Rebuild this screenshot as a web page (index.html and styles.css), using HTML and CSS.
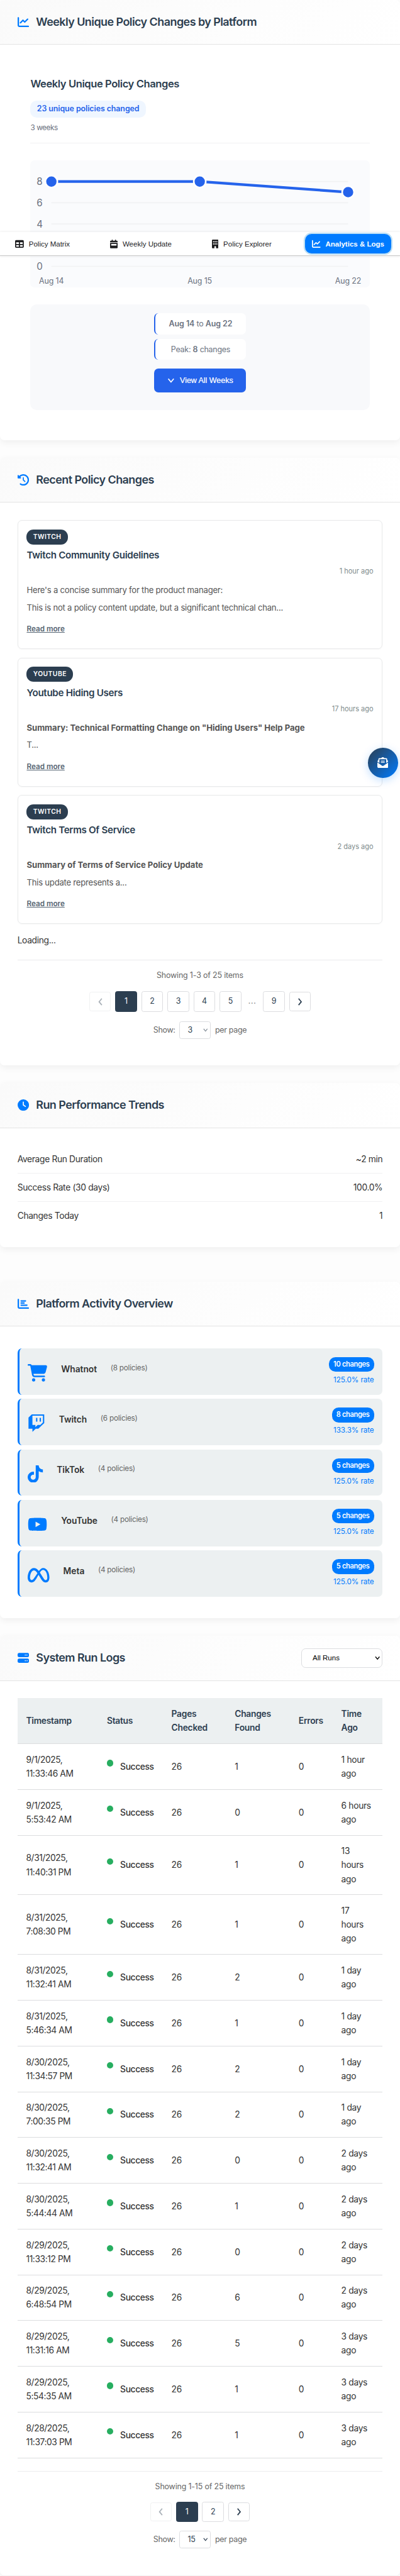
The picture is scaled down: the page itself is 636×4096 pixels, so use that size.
FILE: index.html
```html
<!DOCTYPE html>
<html lang="en">
<head>
<meta charset="utf-8">
<title>Analytics &amp; Logs</title>
<link rel="stylesheet" href="styles.css">
</head>
<body>
<svg class="defs" width="0" height="0">
  <symbol id="chart-line" viewBox="0 0 512 512"><path d="M64 64c0-17.700-14.300-32-32-32S0 46.300 0 64V400c0 44.200 35.800 80 80 80H480c17.700 0 32-14.300 32-32s-14.300-32-32-32H80c-8.800 0-16-7.200-16-16V64zm406.600 86.600c12.500-12.500 12.500-32.800 0-45.300s-32.800-12.500-45.300 0L320 210.700l-57.400-57.400c-12.500-12.500-32.800-12.500-45.300 0l-112 112c-12.500 12.500-12.500 32.800 0 45.300s32.800 12.500 45.300 0L240 221.300l57.400 57.400c12.500 12.500 32.800 12.500 45.300 0l128-128z"/></symbol>
  <symbol id="chevron" viewBox="0 0 16 16"><path d="M3 5l5 6 5-6" fill="none" stroke="currentColor" stroke-width="2"/></symbol>
  <symbol id="prev" viewBox="0 0 10 16"><path d="M8 2L3 8l5 6" fill="none" stroke="currentColor" stroke-width="2"/></symbol>
  <symbol id="next" viewBox="0 0 10 16"><path d="M2 2l5 6-5 6" fill="none" stroke="currentColor" stroke-width="2"/></symbol>
</svg>

<div class="page">

<section class="card card-weekly">
  <header class="card-header">
    <svg class="icon"><use href="#chart-line"/></svg>
    <h2>Weekly Unique Policy Changes by Platform</h2>
  </header>
  <div class="weekly">
    <h3>Weekly Unique Policy Changes</h3>
    <span class="badge">23 unique policies changed</span>
    <p class="weeks">3 weeks</p>
    <svg class="chart" viewBox="0 0 624 234">
      <g class="grid"><path d="M39 39H585M39 78H585M39 117H585M39 156H585M39 195H585"/></g>
      <g class="axis-y"><text x="12" y="45.300">8</text><text x="12" y="84.300">6</text><text x="12" y="123.300">4</text><text x="12" y="201.300">0</text></g>
      <polyline class="trend" points="39,39 312,39 585,58.500"/>
      <g class="dots"><circle cx="39" cy="39" r="11"/><circle cx="312" cy="39" r="11"/><circle cx="585" cy="58.500" r="11"/></g>
      <g class="axis-x"><text x="39" y="226.500">Aug 14</text><text x="312" y="226.500">Aug 15</text><text x="585" y="226.500">Aug 22</text></g>
    </svg>
    <div class="summary">
      <div class="summary-item"><b>Aug 14</b> to <b>Aug 22</b></div>
      <div class="summary-item">Peak: <b>8</b> changes</div>
      <button class="view-all"><svg width="16" height="16"><use href="#chevron"/></svg>View All Weeks</button>
    </div>
  </div>
</section>

<section class="card card-recent">
  <header class="card-header">
    <svg class="icon" viewBox="0 0 512 512"><path d="M75 75L41 41C25.900 25.900 0 36.600 0 57.900V168c0 13.300 10.700 24 24 24H134.100c21.400 0 32.100-25.900 17-41l-30.800-30.800C155 85.500 203 64 256 64c106 0 192 86 192 192s-86 192-192 192c-40.800 0-78.600-12.700-109.700-34.400c-14.500-10.100-34.400-6.600-44.600 7.900s-6.600 34.400 7.900 44.600C151.200 495 201.700 512 256 512c141.400 0 256-114.600 256-256S397.400 0 256 0C185.300 0 121.300 28.700 75 75zm181 53c-13.300 0-24 10.700-24 24V256c0 6.400 2.500 12.500 7 17l72 72c9.400 9.400 24.600 9.400 33.900 0s9.400-24.600 0-33.900l-65-65V152c0-13.300-10.700-24-24-24z"/></svg>
    <h2>Recent Policy Changes</h2>
  </header>
  <div class="card-body">
    <article class="change">
      <span class="tag">TWITCH</span>
      <h4>Twitch Community Guidelines</h4>
      <time>1 hour ago</time>
      <p>Here's a concise summary for the product manager:</p>
      <p>This is not a policy content update, but a significant technical chan...</p>
      <a>Read more</a>
    </article>
    <article class="change">
      <span class="tag">YOUTUBE</span>
      <h4>Youtube Hiding Users</h4>
      <time>17 hours ago</time>
      <p><b>Summary: Technical Formatting Change on "Hiding Users" Help Page</b></p>
      <p>T...</p>
      <a>Read more</a>
    </article>
    <article class="change">
      <span class="tag">TWITCH</span>
      <h4>Twitch Terms Of Service</h4>
      <time>2 days ago</time>
      <p><b>Summary of Terms of Service Policy Update</b></p>
      <p>This update represents a...</p>
      <a>Read more</a>
    </article>
    <p class="loading">Loading...</p>
    <div class="pagination">
      <p>Showing 1-3 of 25 items</p>
      <div class="pages pages-tall">
        <span class="pg arrow off"><svg width="10" height="16"><use href="#prev"/></svg></span>
        <span class="pg on">1</span><span class="pg">2</span><span class="pg">3</span><span class="pg">4</span><span class="pg">5</span>
        <span class="dots-gap">...</span>
        <span class="pg">9</span>
        <span class="pg arrow"><svg width="10" height="16"><use href="#next"/></svg></span>
      </div>
      <div class="per-page">Show: <span class="pick pick-muted">3<svg width="11" height="11"><use href="#chevron"/></svg></span> per page</div>
    </div>
  </div>
</section>

<section class="card card-trends">
  <header class="card-header">
    <svg class="icon" viewBox="0 0 512 512"><path d="M256 0a256 256 0 1 1 0 512A256 256 0 1 1 256 0zM232 120V256c0 8 4 15.500 10.700 20l96 64c11 7.400 25.900 4.400 33.300-6.700s4.400-25.900-6.700-33.300L280 243.200V120c0-13.300-10.700-24-24-24s-24 10.700-24 24z"/></svg>
    <h2>Run Performance Trends</h2>
  </header>
  <div class="card-body">
    <div class="stat"><span>Average Run Duration</span><span>~2 min</span></div>
    <div class="stat"><span>Success Rate (30 days)</span><span>100.0%</span></div>
    <div class="stat"><span>Changes Today</span><span>1</span></div>
  </div>
</section>

<section class="card card-activity">
  <header class="card-header">
    <svg class="icon" viewBox="0 0 512 512"><path d="M32 32c17.700 0 32 14.300 32 32V400c0 8.800 7.200 16 16 16H480c17.700 0 32 14.300 32 32s-14.300 32-32 32H80c-44.200 0-80-35.800-80-80V64C0 46.300 14.300 32 32 32zm96 96c0-17.700 14.300-32 32-32l192 0c17.700 0 32 14.300 32 32s-14.300 32-32 32l-192 0c-17.700 0-32-14.300-32-32zm32 64H288c17.700 0 32 14.300 32 32s-14.300 32-32 32H160c-17.700 0-32-14.300-32-32s14.300-32 32-32zm0 96H416c17.700 0 32 14.300 32 32s-14.300 32-32 32H160c-17.700 0-32-14.300-32-32s14.300-32 32-32z"/></svg>
    <h2>Platform Activity Overview</h2>
  </header>
  <div class="card-body">
    <div class="platform">
      <svg width="36" height="32" viewBox="0 0 576 512"><path d="M0 24C0 10.700 10.700 0 24 0H69.500c22 0 41.500 12.800 50.600 32h411c26.300 0 45.500 25 38.600 50.400l-41 152.300c-8.500 31.400-37 53.300-69.500 53.300H170.700l5.400 28.500c2.200 11.300 12.100 19.500 23.600 19.500H488c13.300 0 24 10.700 24 24s-10.700 24-24 24H199.700c-34.600 0-64.300-24.600-70.700-58.500L77.400 54.500c-.7-3.800-4-6.500-7.900-6.500H24C10.700 48 0 37.300 0 24zM128 464a48 48 0 1 1 96 0 48 48 0 1 1-96 0zm336-48a48 48 0 1 1 0 96 48 48 0 1 1 0-96z"/></svg>
      <strong>Whatnot</strong><small>(8 policies)</small>
      <div class="rate"><span>10 changes</span>125.0% rate</div>
    </div>
    <div class="platform">
      <svg width="32" height="32" viewBox="0 0 512 512"><path d="M391.170 103.470H352.540v109.700h38.630zM285 103H246.370V212.750H285zM120.830 0L24.310 91.420V420.580H140.140V512l96.530-91.420h77.250L487.690 256V0zM449.070 237.750l-77.220 73.120H294.610l-67.600 64v-64H140.140V36.580H449.070z"/></svg>
      <strong>Twitch</strong><small>(6 policies)</small>
      <div class="rate"><span>8 changes</span>133.3% rate</div>
    </div>
    <div class="platform">
      <svg width="28" height="32" viewBox="0 0 448 512"><path d="M448,209.910a210.060,210.060,0,0,1-122.770-39.250V349.380A162.550,162.550,0,1,1,185,188.310V278.200a74.620,74.620,0,1,0,52.230,71.180V0l88,0a121.180,121.180,0,0,0,1.860,22.170h0A122.180,122.180,0,0,0,381,102.390a121.430,121.430,0,0,0,67,20.140Z"/></svg>
      <strong>TikTok</strong><small>(4 policies)</small>
      <div class="rate"><span>5 changes</span>125.0% rate</div>
    </div>
    <div class="platform">
      <svg width="36" height="32" viewBox="0 0 576 512"><path d="M549.655 124.083c-6.281-23.650-24.787-42.276-48.284-48.597C458.781 64 288 64 288 64S117.220 64 74.629 75.486c-23.497 6.322-42.003 24.947-48.284 48.597-11.412 42.867-11.412 132.305-11.412 132.305s0 89.438 11.412 132.305c6.281 23.650 24.787 41.500 48.284 47.821C117.220 448 288 448 288 448s170.780 0 213.371-11.486c23.497-6.321 42.003-24.171 48.284-47.821 11.412-42.867 11.412-132.305 11.412-132.305s0-89.438-11.412-132.305zm-317.510 213.508V175.185l142.739 81.205-142.739 81.201z"/></svg>
      <strong>YouTube</strong><small>(4 policies)</small>
      <div class="rate"><span>5 changes</span>125.0% rate</div>
    </div>
    <div class="platform">
      <svg width="40" height="32" viewBox="0 0 640 512"><path d="M640 317.900C640 409.200 600.600 466.400 529.700 466.400C467.100 466.400 433.900 431.800 372.800 329.800L341.400 277.200C333.100 264.700 326.900 253 320.200 242.200C300.100 276 273.100 325.200 273.100 325.200C206.100 441.800 168.500 466.400 116.200 466.400C43.400 466.400 0 409.100 0 320.500C0 177.500 79.800 42.400 183.900 42.400C234.100 42.400 277.700 67.100 328.700 131.900C365.800 81.800 406.800 42.400 459.300 42.400C558.400 42.400 640 168.100 640 317.900H640zM287.400 192.200C244.500 130.100 216.500 111.700 183 111.700C121.100 111.700 69.200 217.800 69.200 321.700C69.200 370.200 87.700 397.400 118.800 397.400C149 397.400 167.800 378.400 222 293.600C222 293.600 246.700 254.500 287.400 192.200V192.200zM531.200 397.400C563.400 397.400 578.100 369.900 578.100 322.500C578.100 198.300 523.800 97.100 454.900 97.100C421.700 97.100 393.800 123 360 175.100C369.400 188.900 379.100 204.100 389.300 220.500L426.800 282.900C485.500 377 500.300 397.400 531.200 397.400L531.200 397.400z"/></svg>
      <strong>Meta</strong><small>(4 policies)</small>
      <div class="rate"><span>5 changes</span>125.0% rate</div>
    </div>
  </div>
</section>

<section class="card card-logs">
  <header class="card-header">
    <svg class="icon" viewBox="0 0 512 512"><path d="M64 32C28.700 32 0 60.700 0 96v64c0 35.300 28.700 64 64 64H448c35.300 0 64-28.700 64-64V96c0-35.300-28.700-64-64-64H64zm280 72a24 24 0 1 1 0 48 24 24 0 1 1 0-48zm48 24a24 24 0 1 1 48 0 24 24 0 1 1 -48 0zM64 288c-35.300 0-64 28.700-64 64v64c0 35.300 28.700 64 64 64H448c35.300 0 64-28.700 64-64V352c0-35.300-28.700-64-64-64H64zm280 72a24 24 0 1 1 0 48 24 24 0 1 1 0-48zm56 24a24 24 0 1 1 48 0 24 24 0 1 1 -48 0z"/></svg>
    <h2>System Run Logs</h2>
    <div class="filter">All Runs<svg width="12" height="12"><use href="#chevron"/></svg></div>
  </header>
  <div class="card-body">
    <table class="logs">
      <colgroup><col class="c1"><col class="c2"><col class="c3"><col class="c4"><col class="c5"><col class="c6"></colgroup>
      <thead><tr><th>Timestamp</th><th>Status</th><th>Pages<br>Checked</th><th>Changes<br>Found</th><th>Errors</th><th>Time<br>Ago</th></tr></thead>
      <tbody>
        <tr><td>9/1/2025,<br>11:33:46 AM</td><td><i></i><em>Success</em></td><td>26</td><td>1</td><td>0</td><td>1 hour<br>ago</td></tr>
        <tr><td>9/1/2025,<br>5:53:42 AM</td><td><i></i><em>Success</em></td><td>26</td><td>0</td><td>0</td><td>6 hours<br>ago</td></tr>
        <tr><td>8/31/2025,<br>11:40:31 PM</td><td><i></i><em>Success</em></td><td>26</td><td>1</td><td>0</td><td>13<br>hours<br>ago</td></tr>
        <tr><td>8/31/2025,<br>7:08:30 PM</td><td><i></i><em>Success</em></td><td>26</td><td>1</td><td>0</td><td>17<br>hours<br>ago</td></tr>
        <tr><td>8/31/2025,<br>11:32:41 AM</td><td><i></i><em>Success</em></td><td>26</td><td>2</td><td>0</td><td>1 day<br>ago</td></tr>
        <tr><td>8/31/2025,<br>5:46:34 AM</td><td><i></i><em>Success</em></td><td>26</td><td>1</td><td>0</td><td>1 day<br>ago</td></tr>
        <tr><td>8/30/2025,<br>11:34:57 PM</td><td><i></i><em>Success</em></td><td>26</td><td>2</td><td>0</td><td>1 day<br>ago</td></tr>
        <tr><td>8/30/2025,<br>7:00:35 PM</td><td><i></i><em>Success</em></td><td>26</td><td>2</td><td>0</td><td>1 day<br>ago</td></tr>
        <tr><td>8/30/2025,<br>11:32:41 AM</td><td><i></i><em>Success</em></td><td>26</td><td>0</td><td>0</td><td>2 days<br>ago</td></tr>
        <tr><td>8/30/2025,<br>5:44:44 AM</td><td><i></i><em>Success</em></td><td>26</td><td>1</td><td>0</td><td>2 days<br>ago</td></tr>
        <tr><td>8/29/2025,<br>11:33:12 PM</td><td><i></i><em>Success</em></td><td>26</td><td>0</td><td>0</td><td>2 days<br>ago</td></tr>
        <tr><td>8/29/2025,<br>6:48:54 PM</td><td><i></i><em>Success</em></td><td>26</td><td>6</td><td>0</td><td>2 days<br>ago</td></tr>
        <tr><td>8/29/2025,<br>11:31:16 AM</td><td><i></i><em>Success</em></td><td>26</td><td>5</td><td>0</td><td>3 days<br>ago</td></tr>
        <tr><td>8/29/2025,<br>5:54:35 AM</td><td><i></i><em>Success</em></td><td>26</td><td>1</td><td>0</td><td>3 days<br>ago</td></tr>
        <tr><td>8/28/2025,<br>11:37:03 PM</td><td><i></i><em>Success</em></td><td>26</td><td>1</td><td>0</td><td>3 days<br>ago</td></tr>
      </tbody>
    </table>
    <div class="pagination">
      <p>Showing 1-15 of 25 items</p>
      <div class="pages">
        <span class="pg arrow off"><svg width="10" height="16"><use href="#prev"/></svg></span>
        <span class="pg on">1</span><span class="pg">2</span>
        <span class="pg arrow"><svg width="10" height="16"><use href="#next"/></svg></span>
      </div>
      <div class="per-page">Show: <span class="pick">15<svg width="11" height="11"><use href="#chevron"/></svg></span> per page</div>
    </div>
  </div>
</section>

<nav class="tabs">
  <a><svg width="16" height="16" viewBox="0 0 512 512"><path d="M64 256V160H224v96H64zm0 64H224v96H64V320zm224 96V320H448v96H288zM448 256H288V160H448v96zM64 32C28.700 32 0 60.700 0 96V416c0 35.300 28.700 64 64 64H448c35.300 0 64-28.700 64-64V96c0-35.300-28.700-64-64-64H64z"/></svg>Policy Matrix</a>
  <a><svg width="14" height="16" viewBox="0 0 448 512"><path d="M128 0c17.700 0 32 14.300 32 32V64H288V32c0-17.700 14.300-32 32-32s32 14.300 32 32V64h48c26.500 0 48 21.500 48 48v48H0V112C0 85.500 21.500 64 48 64H96V32c0-17.700 14.300-32 32-32zM0 192H448V464c0 26.500-21.500 48-48 48H48c-26.500 0-48-21.500-48-48V192zm80 64c-8.800 0-16 7.200-16 16v64c0 8.800 7.200 16 16 16H368c8.800 0 16-7.200 16-16V272c0-8.800-7.200-16-16-16H80z"/></svg>Weekly Update</a>
  <a><svg width="12" height="16" viewBox="0 0 384 512"><path fill-rule="evenodd" d="M48 0C21.500 0 0 21.500 0 48V464c0 26.500 21.500 48 48 48h96V432c0-26.500 21.500-48 48-48s48 21.500 48 48v80h96c26.500 0 48-21.500 48-48V48c0-26.500-21.500-48-48-48H48zM64 96h64v64H64zM160 96h64v64h-64zM256 96h64v64h-64zM64 224h64v64H64zM160 224h64v64h-64zM256 224h64v64h-64z"/></svg>Policy Explorer</a>
  <a class="active"><svg width="16" height="16"><use href="#chart-line"/></svg>Analytics &amp; Logs</a>
</nav>

<button class="fab"><svg width="20" height="20" viewBox="0 0 512 512"><path d="M215.400 96H144 107.800 96v8.800V144v40.400 89L.2 202.500c1.600-18.100 10.900-34.900 25.700-45.800L48 140.300V96c0-26.500 21.500-48 48-48h76.600l49.900-36.900C232.200 3.900 243.900 0 256 0s23.800 3.900 33.500 11L339.400 48H416c26.500 0 48 21.500 48 48v44.300l22.100 16.400c14.800 10.900 24.100 27.700 25.700 45.800L416 273.400v-89V144 104.800 96H404.200 368 296.600 215.400zM0 448V242.100L217.600 403.300c11.100 8.200 24.600 12.700 38.400 12.700s27.300-4.400 38.400-12.700L512 242.100V448v0c0 35.300-28.700 64-64 64H64c-35.300 0-64-28.700-64-64v0zM176 160H336c8.800 0 16 7.200 16 16s-7.200 16-16 16H176c-8.800 0-16-7.200-16-16s7.200-16 16-16zm0 64H336c8.800 0 16 7.200 16 16s-7.200 16-16 16H176c-8.800 0-16-7.200-16-16s7.200-16 16-16z"/></svg></button>

</div>
</body>
</html>
```
FILE: styles.css
```css
* { box-sizing: border-box; margin: 0; padding: 0; }
html { background: #fdfdfd; }
body { overflow: hidden; }
.defs { position: absolute; }
svg { fill: currentColor; flex: none; }

.page {
  position: relative;
  zoom: 0.86413;
  width: 736px;
  height: 4740px;
  overflow: hidden;
  font: 16px/25.6px "Inter", sans-serif;
  letter-spacing: -0.025em;
  color: #333;
  background: #fdfdfd;
}

.card {
  background: #fff;
  border-radius: 8px;
  box-shadow: 0 4px 12px rgba(0, 0, 0, 0.055);
  margin-bottom: 32.300px;
}
.card-weekly { height: 810px; }
.card-recent { height: 1118.300px; }
.card-trends { height: 301.700px; margin-bottom: 63.700px; }
.card-activity { height: 619.700px; }
.card-logs { height: 1728.500px; margin-bottom: 0; }

.card-header {
  display: flex;
  align-items: center;
  height: 82.700px;
  padding: 0 32px;
  border-bottom: 1px solid #e4e4e4;
  border-radius: 8px 8px 0 0;
  background: linear-gradient(135deg, #fafafa, #fff);
}
.card-header h2 {
  font-size: 20.800px;
  font-weight: 600;
  letter-spacing: -0.0314em;
  color: #2c3e50;
}
.icon { width: 21px; height: 21px; margin-right: 13.300px; color: #007bff; }
.card-body { padding: 32px 32px 0; }

/* Weekly chart */
.weekly { display: flex; flex-direction: column; align-items: flex-start; padding: 56.300px 56px 0; }
.weekly h3 { font-size: 19.200px; line-height: 31px; font-weight: 600; letter-spacing: -0.026em; color: #2c3e50; }
.badge {
  margin-top: 15px;
  padding: 0 12px;
  width: 213px;
  font-size: 14.400px;
  line-height: 31px;
  font-weight: 600;
  letter-spacing: -0.008em;
  color: #2563eb;
  background: #eff6ff;
  border-radius: 12px;
}
.weeks {
  width: 100%;
  padding: 8.500px 0 16px;
  border-bottom: 1px solid #f0f0f2;
  font-size: 13.600px;
  line-height: 21.800px;
  letter-spacing: -0.035em;
  color: #6b7280;
}
.chart { width: 624px; height: 234px; margin-top: 32px; border-radius: 8px; background: #fafbfd; }
.grid path { stroke: #f1f2f4; stroke-width: 2; }
.axis-y { font-size: 17.600px; fill: #6b7280; }
.axis-x { font-size: 14.400px; fill: #6b7280; text-anchor: middle; letter-spacing: -0.01em; }
.trend { fill: none; stroke: #2563eb; stroke-width: 5; }
.dots circle { fill: #2563eb; stroke: #fff; stroke-width: 3; }

.summary {
  display: flex;
  flex-direction: column;
  align-items: center;
  gap: 8px;
  width: 624px;
  height: 194px;
  margin-top: 31px;
  padding-top: 16px;
  border-radius: 12px;
  background: #f8f9fb;
}
.summary-item {
  width: 168px;
  height: 39px;
  border-left: 3px solid #2563eb;
  border-radius: 8px;
  background: #fff;
  font-size: 14.400px;
  line-height: 40px;
  letter-spacing: -0.02em;
  text-align: center;
  color: #6b7280;
}
.summary-item b { font-weight: 600; letter-spacing: -0.005em; }
.view-all {
  display: flex;
  align-items: center;
  justify-content: center;
  gap: 8px;
  width: 168px;
  height: 44px;
  margin-top: 8px;
  border: 0;
  border-radius: 8px;
  background: #2563eb;
  color: #fff;
  font: 500 14.400px "Liberation Sans", sans-serif;
  -webkit-text-stroke: 0.25px #fff;
}

/* Floating navigation */
.tabs {
  position: absolute;
  top: 427px;
  left: 0;
  display: flex;
  justify-content: space-between;
  align-items: center;
  width: 736px;
  height: 44.500px;
  padding: 0 16px 0 15px;
  border-bottom: 1px solid #c8c8c8;
  background: #fff;
  box-shadow: 0 0 5px rgba(0, 0, 0, 0.1);
  font: 13.333px "Liberation Sans", sans-serif;
  letter-spacing: 0;
  color: #1d1d1f;
}
.tabs a { display: flex; align-items: center; gap: 9px; height: 36px; padding: 0 13px; white-space: nowrap; }
.tabs .active {
  border-radius: 12px;
  background: #007bff;
  box-shadow: 0 0 0 2.500px #bfe0f5;
  color: #fff;
  font-weight: 700;
}

/* Recent changes */
.change {
  display: flex;
  flex-direction: column;
  align-items: flex-start;
  height: 237.100px;
  margin-bottom: 16px;
  padding: 16px;
  border: 1px solid #e8e9ea;
  border-radius: 8px;
  box-shadow: 0 1px 3px rgba(0, 0, 0, 0.03);
}
.tag {
  padding: 0 12px;
  height: 27.500px;
  font-size: 12px;
  line-height: 27.500px;
  font-weight: 600;
  letter-spacing: 0.04em;
  color: #fff;
  background: #2c3e50;
  border-radius: 13px;
}
.change h4 { margin-top: 6.500px; font-size: 17.600px; line-height: 28.200px; font-weight: 600; letter-spacing: -0.0215em; color: #2c3e50; }
.change time { align-self: flex-end; margin-top: 5.500px; font-size: 12.800px; line-height: 20.500px; letter-spacing: -0.003em; color: #7f8c8d; }
.change p { margin-top: 7.700px; font-size: 15.200px; line-height: 24.300px; letter-spacing: -0.018em; color: #555; }
.change time + p { margin-top: 11.700px; }
.change b { letter-spacing: -0.002em; }
.change a { margin-top: 16.500px; font-size: 13.600px; line-height: 21.800px; font-weight: 600; letter-spacing: -0.003em; color: #566573; text-decoration: underline; }
.loading { padding-top: 1px; }

/* Pagination */
.pagination {
  display: flex;
  flex-direction: column;
  align-items: center;
  gap: 16px;
  margin-top: 23.500px;
  padding-top: 16.300px;
  border-top: 1px solid #ebebed;
  font-size: 14.400px;
  line-height: 23px;
  letter-spacing: -0.014em;
  color: #666;
}
.pages { display: flex; align-items: center; gap: 8px; height: 37.500px; }
.pages-tall { height: 40.200px; }
.pg {
  display: flex;
  align-items: center;
  justify-content: center;
  width: 40px;
  height: 37.500px;
  border: 1px solid #dcdde0;
  border-radius: 4px;
  background: #fff;
  color: #2c3e50;
}
.pg.on { background: #2c3e50; border-color: #2c3e50; color: #fff; }
.pg.arrow { height: 35px; }
.pg.off { opacity: 0.4; }
.dots-gap { width: 24px; text-align: center; font-size: 16px; letter-spacing: 0.02em; color: #888; }
.per-page { display: flex; align-items: center; gap: 8px; letter-spacing: -0.025em; }
.pick {
  display: flex;
  align-items: center;
  justify-content: space-between;
  width: 57.500px;
  height: 32.700px;
  padding: 0 3px 0 14px;
  border: 1px solid #dcdde0;
  border-radius: 4px;
  color: #2c3e50;
}
.pick-muted svg { opacity: 0.6; }

/* Run stats */
.card-trends .card-body { padding-top: 31.300px; }
.stat { display: flex; justify-content: space-between; height: 52.100px; line-height: 51.500px; border-bottom: 1px solid #f0f1f2; }
.stat:last-child { border-bottom: 0; }

/* Platforms */
.card-activity .card-body { padding-top: 40.300px; }
.platform {
  display: flex;
  align-items: flex-start;
  height: 85px;
  margin-bottom: 8px;
  padding: 16px;
  border-left: 4px solid #007bff;
  border-radius: 8px;
  background: #ecf0f1;
}
.platform svg { margin-top: 13px; color: #007bff; }
.platform strong { margin: 9px 25px 0; font-weight: 600; letter-spacing: -0.002em; }
.platform small { margin-top: 9px; font-size: 13.600px; line-height: 22px; letter-spacing: -0.0206em; color: #666; }
.rate { display: flex; flex-direction: column; align-items: flex-end; margin-left: auto; font-size: 13.600px; line-height: 22px; letter-spacing: -0.01em; color: #007bff; }
.rate span {
  height: 27px;
  margin-bottom: 4.500px;
  padding: 0 8px;
  border-radius: 12px;
  background: #007bff;
  color: #fff;
  font-size: 12.800px;
  line-height: 27px;
  font-weight: 600;
  letter-spacing: -0.027em;
}

/* Logs */
.filter {
  display: flex;
  align-items: center;
  justify-content: space-between;
  width: 150px;
  height: 35px;
  margin-left: auto;
  padding: 0 2px 0 20px;
  border: 1px solid #dcdde0;
  border-radius: 8px;
  background: #fff;
  font: 13.333px "Liberation Sans", sans-serif;
  letter-spacing: 0;
  color: #000;
}
.logs { width: 672px; table-layout: fixed; border-collapse: separate; border-spacing: 0; }
.c1 { width: 148.700px; }
.c2 { width: 118.800px; }
.c3 { width: 116.500px; }
.c4 { width: 117.500px; }
.c5 { width: 78.500px; }
.c6 { width: 92px; }
.logs th, .logs td { height: 84.200px; padding: 0 0 0 16px; border-bottom: 1px solid #dcdddf; text-align: left; vertical-align: middle; white-space: nowrap; }
.logs tr:has(td br ~ br) td { height: 109.800px; }
.logs th { font-weight: 600; letter-spacing: -0.019em; color: #2c3e50; background: #ecf0f1; }
.logs i { display: inline-block; width: 12px; height: 12px; margin-right: 12.500px; border-radius: 50%; background: #27ae60; vertical-align: 6px; }
.logs em { font-style: normal; font-weight: 500; letter-spacing: -0.028em; }
.logs td:first-child { letter-spacing: -0.03em; }

.fab {
  position: absolute;
  top: 1376px;
  left: 677px;
  display: flex;
  align-items: center;
  justify-content: center;
  width: 55px;
  height: 55px;
  border: 0;
  border-radius: 50%;
  background: linear-gradient(135deg, #2c3e50, #007bff);
  box-shadow: 0 4px 16px rgba(0, 123, 255, 0.25);
  color: #fff;
}
```
